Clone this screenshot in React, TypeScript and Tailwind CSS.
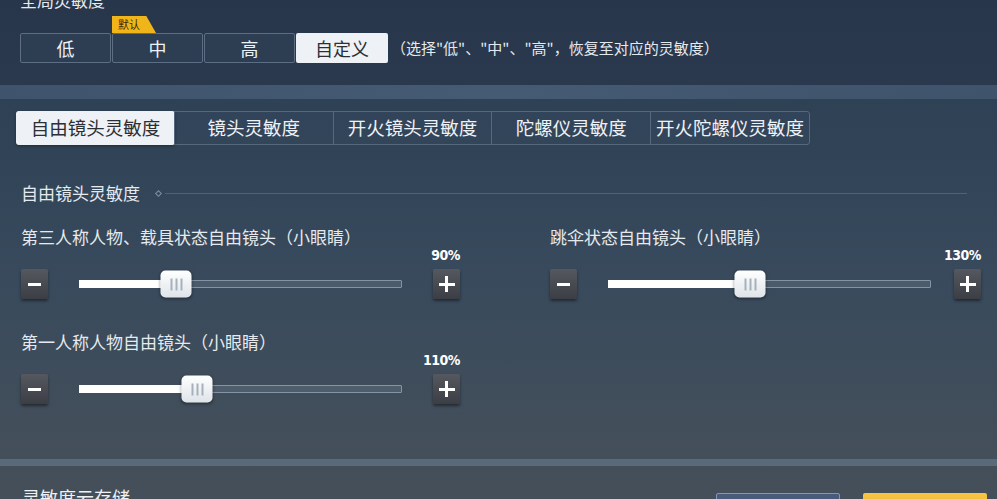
import React from 'react';

const font = { fontFamily: '"Noto Sans CJK SC", "Noto Sans", sans-serif' };

const presets = ['低', '中', '高', '自定义'];
const tabs = ['自由镜头灵敏度', '镜头灵敏度', '开火镜头灵敏度', '陀螺仪灵敏度', '开火陀螺仪灵敏度'];

function StepButton({ kind }: { kind: 'minus' | 'plus' }) {
  return (
    <div className="flex h-[30px] w-[27px] shrink-0 items-center justify-center rounded-[2px] bg-gradient-to-b from-[#55595f] to-[#3b3f45] shadow-[0_2px_3px_rgba(0,0,0,0.45)]">
      {kind === 'minus' ? (
        <div className="h-[3px] w-[13px] bg-white" />
      ) : (
        <div className="relative h-[16px] w-[16px]">
          <div className="absolute left-0 top-[6.5px] h-[3px] w-[16px] bg-white" />
          <div className="absolute left-[6.5px] top-0 h-[16px] w-[3px] bg-white" />
        </div>
      )}
    </div>
  );
}

function Slider({ label, value, pos }: { label: string; value: string; pos: number }) {
  return (
    <div className="flex w-[439px] flex-col">
      <div className="h-[22px] text-[17px] leading-[22px] text-[#e6eaee]">{label}</div>
      <div
        className="-mt-[1px] h-[16px] text-right text-[14px] font-bold leading-[16px] tracking-[-0.5px] text-white"
        style={{ fontFamily: '"DejaVu Sans Condensed", "Liberation Sans", sans-serif' }}
      >
        {value}
      </div>
      <div className="mt-[6px] flex h-[30px] items-center">
        <StepButton kind="minus" />
        <div className="relative ml-[31px] h-[8px] w-[323px] rounded-[1px] border border-[#8394a4] bg-[#5a6876]/60">
          <div className="absolute -left-px -top-px h-[8px] bg-white" style={{ width: pos }} />
          <div
            className="absolute top-1/2 flex h-[27px] w-[31px] -translate-x-1/2 -translate-y-1/2 items-center justify-center gap-[3px] rounded-[5px] bg-gradient-to-b from-white to-[#dfe4ea] shadow-[0_1px_3px_rgba(0,0,0,0.4)]"
            style={{ left: pos }}
          >
            <div className="h-[12px] w-[2px] bg-[#a7b1bc]" />
            <div className="h-[12px] w-[2px] bg-[#a7b1bc]" />
            <div className="h-[12px] w-[2px] bg-[#a7b1bc]" />
          </div>
        </div>
        <div className="ml-auto">
          <StepButton kind="plus" />
        </div>
      </div>
    </div>
  );
}

export default function App() {
  return (
    <div className="flex h-[499px] w-[997px] flex-col overflow-hidden bg-[#434e59]" style={font}>
      {/* global preset */}
      <div className="h-[85px] shrink-0 bg-gradient-to-b from-[#27364a] to-[#2a394d] px-[20px]">
        <div className="-mt-[10px] h-[20px] text-[17px] leading-[20px] text-[#e6eaee]">全局灵敏度</div>
        <div className="mt-[23px] flex items-center">
          <div className="flex h-[30px]">
            {presets.map((p, i) => {
              const active = i === 3;
              return (
                <div
                  key={p}
                  className={
                    active
                      ? 'relative flex w-[92px] items-center justify-center rounded-[2px] bg-[#eef1f5] text-[18px] text-[#2c2f34]'
                      : 'relative mr-px flex w-[91px] items-center justify-center rounded-[2px] border border-[#5d6e84] bg-[#2d3d52] text-[18px] text-[#eef1f5]'
                  }
                >
                  {i === 1 && (
                    <div className="absolute -top-[18px] left-[-1px] flex h-[17px] w-[44px] items-center bg-[#f1b51c] pl-[6px] text-[11px] leading-none text-[#3a2c00] [clip-path:polygon(0_0,78%_0,100%_100%,0_100%)]">
                      默认
                    </div>
                  )}
                  {p}
                </div>
              );
            })}
          </div>
          <div className="ml-[3px] text-[15px] text-[#e6eaee]">（选择"低"、"中"、"高"，恢复至对应的灵敏度）</div>
        </div>
      </div>
      <div className="h-[14px] shrink-0 bg-gradient-to-r from-[#3f536c] via-[#455a73] to-[#3f546b]" />

      {/* main panel */}
      <div className="flex h-[360px] shrink-0 flex-col bg-gradient-to-b from-[#2e4155] via-[#384a5c] to-[#444f5a] px-[16px] pt-[12px]">
        <div className="flex h-[34px] w-[794px] rounded-[3px] border border-[#56687e] bg-[#33465b]/70">
          {tabs.map((t, i) => (
            <div
              key={t}
              className={
                i === 0
                  ? '-m-px flex w-[159px] items-center justify-center rounded-[3px] bg-[#eef1f5] text-[18.5px] text-[#2c2f34] shadow-[0_1px_3px_rgba(0,0,0,0.35)]'
                  : 'flex w-[159px] items-center justify-center border-l border-[#56687e] text-[18.5px] text-[#eef1f5] first-of-type:border-l-0'
              }
            >
              {t}
            </div>
          ))}
        </div>

        <div className="mt-[37px] flex items-center pl-[5px]">
          <span className="text-[17px] leading-[22px] text-[#e6eaee]">自由镜头灵敏度</span>
          <span className="ml-[16px] h-[5px] w-[5px] rotate-45 border border-[#7d8ea0]" />
          <div className="ml-[4px] mr-[14px] h-px flex-1 bg-[#4f6276]" />
        </div>

        <div className="mt-[22px] flex gap-[90px] pl-[5px]">
          <div className="flex flex-col gap-[32px]">
            <Slider label="第三人称人物、载具状态自由镜头（小眼睛）" value="90%" pos={96} />
            <Slider label="第一人称人物自由镜头（小眼睛）" value="110%" pos={117} />
          </div>
          <Slider label="跳伞状态自由镜头（小眼睛）" value="130%" pos={141} />
        </div>
      </div>
      <div className="h-[7px] shrink-0 bg-[#596a7a]" />

      {/* bottom */}
      <div className="flex flex-1 items-start bg-gradient-to-b from-[#434e59] to-[#45505b] pl-[22px] pr-[10px]">
        <div className="mt-[20px] text-[18px] leading-[22px] text-[#eef1f5]">灵敏度云存储</div>
        <div className="ml-auto mt-[27px] flex gap-[23px]">
          <div className="h-[30px] w-[124px] rounded-[2px] border border-[#8496b4] bg-[#4a5a7a]" />
          <div className="h-[30px] w-[124px] rounded-[2px] bg-gradient-to-b from-[#f7c544] to-[#eaa92a]" />
        </div>
      </div>
    </div>
  );
}
